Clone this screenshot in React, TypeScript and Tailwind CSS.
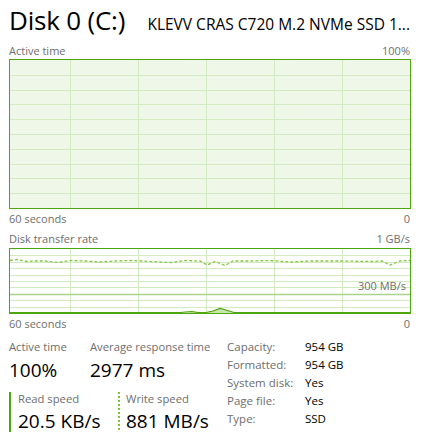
import React from "react";

const VX = [60.5, 128.5, 196.5, 264.5, 332.5];

function Grid({ w, h, rows }: { w: number; h: number; rows: number }) {
  const hs: number[] = [];
  for (let i = 1; i < rows; i++) hs.push(Math.round((h / rows) * i) + 0.5);
  return (
    <>
      {VX.map((x) => (
        <line key={"v" + x} x1={x} y1={0} x2={x} y2={h} stroke="#d2eabf" strokeWidth={1} />
      ))}
      {hs.map((y) => (
        <line key={"h" + y} x1={0} y1={y} x2={w} y2={y} stroke="#d2eabf" strokeWidth={1} />
      ))}
    </>
  );
}

const writePts: [number, number][] = [
  [0, 11.5], [7, 10.5], [17, 12.5], [25, 12], [35, 12], [48, 13.5], [60, 11.5], [75, 12], [90, 13], [105, 12], [120, 11.5], [132, 12], [150, 13], [162, 13.5], [175, 11.5], [190, 12], [197, 16], [205, 12.5], [215, 16.5], [223, 12], [240, 12], [260, 11.5], [280, 13], [300, 12], [330, 12], [360, 12.5], [372, 12], [380, 16], [390, 12], [400, 11.5],
];

export default function App() {
  const label = "text-[#6e6e6e]";
  return (
    <div className="w-[421px] h-[448px] bg-white pl-[9px] pr-[11px] font-['Segoe_UI','Open_Sans',sans-serif] text-black overflow-hidden">
      <div className="flex items-baseline justify-between h-[42px] pt-[2px]">
        <span className="text-[26px] leading-[36px] tracking-[-0.2px]">Disk 0 (C:)</span>
        <span className="text-[15.5px] leading-[20px] whitespace-nowrap">KLEVV CRAS C720 M.2 NVMe SSD 1...</span>
      </div>
      <div className={`flex justify-between text-[11px] leading-[17px] ${label}`}>
        <span>Active time</span>
        <span>100%</span>
      </div>
      <div className="w-[402px] h-[150px] border border-[#4da60c] bg-[#eff7e8]">
        <svg width={400} height={148} className="block">
          <Grid w={400} h={148} rows={10} />
        </svg>
      </div>
      <div className={`flex justify-between text-[11px] leading-[20px] ${label}`}>
        <span>60 seconds</span>
        <span>0</span>
      </div>
      <div className={`flex justify-between text-[11px] leading-[19px] ${label}`}>
        <span>Disk transfer rate</span>
        <span>1 GB/s</span>
      </div>
      <div className="relative w-[402px] h-[66px] border border-[#4da60c] bg-white">
        <svg width={400} height={64} className="block">
          <Grid w={400} h={64} rows={10} />
          <line x1={0} y1={45.5} x2={400} y2={45.5} stroke="#a9d58a" strokeWidth={1.5} />
          <path d="M0 64 L170 64 L175 63 L182 62.5 L188 63.5 L196 64 L203 62 L210 59.5 L216 61 L224 64 L400 64 Z" fill="#c9e6b0" />
          <polyline
            points="0,63.5 170,63.5 175,63 182,62.5 188,63.5 196,63.5 203,62 210,59.5 216,61 224,63.5 400,63.5"
            fill="none"
            stroke="#4da60c"
            strokeWidth={1.2}
          />
          <polyline
            points={writePts.map((p) => p.join(",")).join(" ")}
            fill="none"
            stroke="#86c640"
            strokeWidth={1.3}
            strokeDasharray="3 2"
          />
        </svg>
        <span className="absolute right-[4px] top-[30px] text-[11px] leading-[14px] text-[#6e6e6e]">300 MB/s</span>
      </div>
      <div className={`flex justify-between text-[11px] leading-[20px] ${label}`}>
        <span>60 seconds</span>
        <span>0</span>
      </div>
      <div className="flex items-start mt-[5px]">
        <div className="w-[218px] flex flex-col">
          <div className="flex">
            <div className="w-[81px] flex flex-col">
              <span className={`text-[11.25px] leading-[16px] ${label}`}>Active time</span>
              <span className="text-[19px] leading-[30px]">100%</span>
            </div>
            <div className="flex flex-col">
              <span className={`text-[11.25px] leading-[16px] ${label}`}>Average response time</span>
              <span className="text-[19px] leading-[30px]">2977 ms</span>
            </div>
          </div>
          <div className="flex mt-[7px]">
            <div className="w-[109px] flex">
              <div className="w-[2px] h-[40px] bg-[#4da60c]" />
              <div className="flex flex-col pl-[7px]">
                <span className={`text-[11.25px] leading-[14px] ${label}`}>Read speed</span>
                <span className="text-[19px] leading-[30px]">20.5 KB/s</span>
              </div>
            </div>
            <div className="flex">
              <div className="w-[2px] h-[40px] bg-[repeating-linear-gradient(to_bottom,#7cc23a_0px,#7cc23a_2px,transparent_2px,transparent_4px)]" />
              <div className="flex flex-col pl-[6px]">
                <span className={`text-[11.25px] leading-[14px] ${label}`}>Write speed</span>
                <span className="text-[19px] leading-[30px]">881 MB/s</span>
              </div>
            </div>
          </div>
        </div>
        <div className="grid grid-cols-[78px_auto] auto-rows-[18px] text-[11.5px] leading-[18px] -mt-[1px]">
          <span className={label}>Capacity:</span>
          <span>954 GB</span>
          <span className={label}>Formatted:</span>
          <span>954 GB</span>
          <span className={label}>System disk:</span>
          <span>Yes</span>
          <span className={label}>Page file:</span>
          <span>Yes</span>
          <span className={label}>Type:</span>
          <span>SSD</span>
        </div>
      </div>
    </div>
  );
}
